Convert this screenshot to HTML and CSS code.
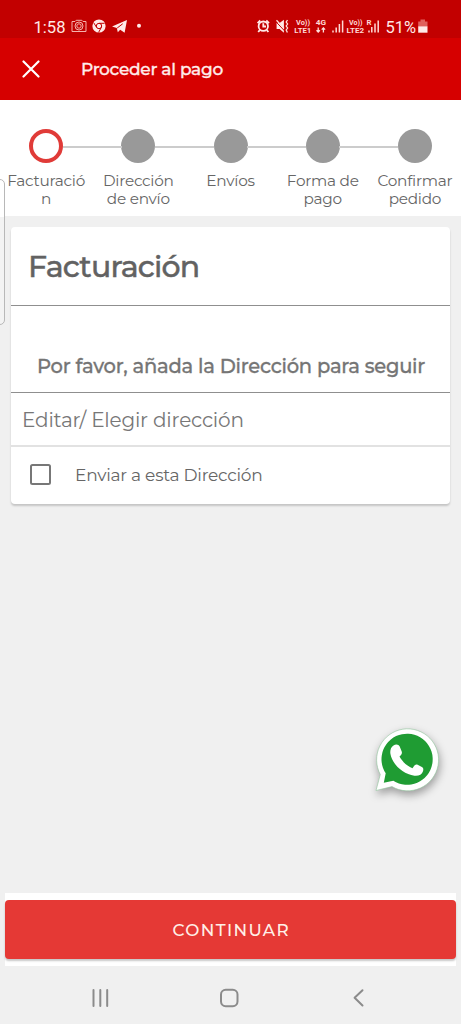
FILE: index.html
```html
<!DOCTYPE html>
<html lang="es">
<head>
<meta charset="utf-8">
<meta name="viewport" content="width=device-width, initial-scale=1">
<title>Proceder al pago</title>
<link rel="stylesheet" href="styles.css">
</head>
<body>
<div class="screen">
  <div class="status">
    <svg class="status-icons" viewBox="0 0 461 38" width="461" height="38" role="img">
      <text class="st-main" x="33.5" y="32.5" textLength="32" lengthAdjust="spacingAndGlyphs">1:58</text>
      <g class="thin">
        <path d="M72 21.5h3l1.2-1.2h5.6l1.2 1.2h3v10H72z"/>
        <circle cx="79" cy="26" r="4"/><circle cx="79" cy="26" r="2.2"/>
      </g>
      <circle class="fill" cx="99" cy="26" r="6.6"/>
      <g class="cut"><circle cx="99" cy="26" r="2.7"/><path d="M99 23.3h5.6M96.6 27.4l-3-4.8M101.3 27.4l-2.7 5"/></g>
      <path class="fill" d="M112 26.4L127 20l-2.4 12.8-4.4-3-2.4 2.5-1-4.3z"/>
      <path class="cut" d="M117.2 28l5.5-4.2"/>
      <circle class="fill" cx="139" cy="25.8" r="2"/>
      <g class="alarm"><circle cx="263.3" cy="26.2" r="4.7"/><path d="M263.3 23.3v3.2h2.7M257.6 23.2l2.7-2.7M269 23.2l-2.7-2.7M259.8 30.2l-1.6 1.8M266.8 30.2l1.6 1.8"/></g>
      <path class="fill" d="M276.6 23h3l4.300-3.200v12.900l-4.300-3.700h-3z"/>
      <path class="mutecut" d="M276 21.800l8.500 9"/>
      <path class="thin heavy" d="M276.500 20.200l7.500 8.300M287.500 20l-1.300 2 1.400 2-1.400 2 1.400 2-1.400 2 1.200 2.500"/>
      <g class="st-tiny">
        <text x="296" y="25.3" textLength="14" lengthAdjust="spacingAndGlyphs">Vo))</text>
        <text x="294.3" y="33" textLength="17" lengthAdjust="spacingAndGlyphs">LTE1</text>
        <text x="315.7" y="25.3" textLength="10.3" lengthAdjust="spacingAndGlyphs">4G</text>
        <text x="349" y="25.3" textLength="13.5" lengthAdjust="spacingAndGlyphs">Vo))</text>
        <text x="346.6" y="33" textLength="17.6" lengthAdjust="spacingAndGlyphs">LTE2</text>
        <text x="366.5" y="25.3" textLength="5" lengthAdjust="spacingAndGlyphs">R</text>
      </g>
      <path class="thin heavy" d="M318.2 27.5v4.5m-1.7-1.7l1.7 1.7 1.7-1.7M323.4 32.4v-4.5m-1.7 1.7l1.7-1.7 1.7 1.7"/>
      <path class="bars" d="M333 30.5v2M336.2 27.5v5M339.4 24v8.5M342.6 20.5v12M369 30.5v2M371.8 27v5.5M375 23.5v9M378.2 20.5v12"/>
      <text class="st-main" x="385.5" y="32.5" textLength="30.5" lengthAdjust="spacingAndGlyphs">51%</text>
      <path class="batt-top" d="M420.5 19.5h4.5v2h2.5v5h-9.3v-5h2.3z"/>
      <path class="fill" d="M418.2 26.3h9.3v6.4h-9.3z"/>
    </svg>
  </div>
  <header class="appbar">
    <svg class="close" viewBox="0 0 18 18" width="18" height="18"><path d="M1.5 1.5l15 15M16.5 1.5l-15 15"/></svg>
    <h1 class="title">Proceder al pago</h1>
  </header>
  <ol class="steps">
    <li class="step active"><span class="dot"></span><span class="label">Facturació<br>n</span></li>
    <li class="step"><span class="dot"></span><span class="label">Dirección<br>de envío</span></li>
    <li class="step"><span class="dot"></span><span class="label">Envíos</span></li>
    <li class="step"><span class="dot"></span><span class="label">Forma de<br>pago</span></li>
    <li class="step"><span class="dot"></span><span class="label">Confirmar<br>pedido</span></li>
  </ol>
  <main class="content">
    <section class="card">
      <h2 class="card-title">Facturación</h2>
      <p class="notice">Por favor, añada la Dirección para seguir</p>
      <a class="edit">Editar/ Elegir dirección</a>
      <label class="option"><span class="box"></span><span class="option-text">Enviar a esta Dirección</span></label>
    </section>
  </main>
  <footer class="footer"><button class="continue">CONTINUAR</button></footer>
  <nav class="nav">
    <svg viewBox="0 0 461 58" width="461" height="58">
      <path d="M93.5 24v16M100.3 24v16M107.2 24v16"/>
      <rect x="221" y="23.8" width="16.5" height="16.4" rx="4.7"/>
      <path d="M362.5 24.3l-7.9 7.5 7.9 7.7"/>
    </svg>
  </nav>
  <div class="edge-handle"></div>
  <svg class="whatsapp" viewBox="0 0 80 80" width="80" height="80">
    <path class="bubble" d="M11 70.500L15.300 54.500A31 31 0 1 1 27 66.600z"/>
    <path class="green" d="M18.800 62.800L20.700 53.300A25.600 25.600 0 1 1 28.300 60.800z"/>
    <path class="phone" d="M28.500 25.500c2.200-1.700 5.200-1.300 6.200 1l2 5c.6 1.600.1 2.800-2.200 5 3.200 5.500 7.200 9.300 13 11.700 2.300-3.400 3.200-4.200 5.100-3.500l4.300 2.200c1.700.9 1.600 2.400 1.100 4.300-1 3.400-4.700 5.100-8.600 4.500-11.500-1.700-22.200-11.300-24-21.900-.5-3.300.4-6.500 3.100-8.300z"/>
  </svg>
</div>
</body>
</html>
```
FILE: styles.css
```css
* { box-sizing: border-box; }
body { margin: 0; background: #efefef; font-family: Montserrat, Inter, "Liberation Sans", sans-serif; color: #666; }
.screen { position: relative; display: flex; flex-direction: column; width: 461px; height: 1024px; overflow: hidden; background: #f0f0f0; }
h1, h2, p, ol { margin: 0; padding: 0; }

.status { height: 38px; background: #c20000; }
.status-icons { display: block; }
.st-main { font: 17px Roboto, sans-serif; fill: #ffe9e6; }
.st-tiny { font: 700 8px Roboto, sans-serif; fill: #ffd9d5; }
.fill { fill: #ffeae8; }
.thin { fill: none; stroke: #f5b3ad; stroke-width: 1; }
.thin.heavy { stroke: #ffe0dc; stroke-width: 1.3; }
.cut { fill: none; stroke: #c20000; stroke-width: 1; }
.alarm { fill: none; stroke: #ffeae8; stroke-width: 1.8; }
.mutecut { stroke: #c20000; stroke-width: 1; }
.bars { stroke: #ffd9d5; stroke-width: 1.5; }
.batt-top { fill: #e0605c; }

.appbar { display: flex; align-items: center; height: 62px; padding-left: 22px; gap: 41px; background: #d60000; }
.close { fill: none; stroke: #fff; stroke-width: 2.2; stroke-linecap: round; }
.title { font-size: 17px; font-weight: 500; line-height: 20px; color: #ffecea; letter-spacing: -.3px; white-space: nowrap; -webkit-text-stroke: .3px #ffecea; }

.steps { display: flex; height: 116px; padding-top: 29px; background: #fff; list-style: none; }
.step { flex: 1; display: flex; flex-direction: column; align-items: center; position: relative; }
.step + .step::before { content: ""; position: absolute; top: 17px; left: -29.5px; width: 59px; height: 2px; background: #ccc; }
.dot { width: 34px; height: 34px; border-radius: 50%; background: #999; }
.active .dot { background: #fff; border: 4.5px solid #e03b38; }
.label { margin-top: 9px; font-size: 15.3px; line-height: 18.3px; text-align: center; white-space: nowrap; letter-spacing: -.25px; }

.content { flex: 1; padding: 11px 11px 0; }
.card { background: #fff; border-radius: 4px; box-shadow: 0 2px 2px rgba(0,0,0,.18); height: 277px; }
.card-title { height: 79px; padding-left: 17px; border-bottom: 1px solid #8f8f8f; font-size: 30px; font-weight: 500; line-height: 79px; letter-spacing: -.8px; color: #626262; -webkit-text-stroke: .4px #626262; }
.notice { height: 87px; padding-top: 47px; padding-left: 26px; border-bottom: 1px solid #8f8f8f; font-size: 19.5px; font-weight: 500; line-height: 26px; letter-spacing: -.23px; color: #757575; white-space: nowrap; -webkit-text-stroke: .3px #757575; }
.edit { display: block; height: 54px; padding-left: 11px; border-bottom: 2px solid #e2e2e2; font-size: 20px; line-height: 54px; letter-spacing: -.19px; color: #777; }
.option { display: flex; align-items: center; height: 57px; padding: 0 0 2px 19px; gap: 24px; }
.box { width: 21px; height: 21px; border: 2px solid #777; border-radius: 2.5px; }
.option-text { padding-top: 1px; font-size: 17px; letter-spacing: -.24px; color: #666; }

.footer { height: 73px; margin: 0 5px; padding-top: 7px; background: #fff; }
.continue { display: block; width: 451px; height: 59px; padding: 0; border: 0; border-radius: 4px; background: #e53935; color: #fff0e8; font: 500 16.8px Montserrat, Inter, sans-serif; letter-spacing: 1.35px; text-indent: 1.5px; box-shadow: 0 2px 2px rgba(0,0,0,.22); }
.nav { height: 58px; }
.nav svg { display: block; fill: none; stroke: #8b8b8b; stroke-width: 2; stroke-linecap: round; stroke-linejoin: round; }

.edge-handle { position: absolute; top: 179px; left: -8px; width: 13px; height: 146px; border: 1px solid #b8b8b8; border-radius: 5px; background: linear-gradient(#fff 37px, #f3f3f3 37px); }
.whatsapp { position: absolute; left: 365px; top: 720px; overflow: visible; }
.bubble { fill: #fff; stroke: #8fc49a; stroke-width: .6; filter: drop-shadow(1px 4px 4px rgba(0,0,0,.35)); }
.green { fill: #1f9c33; }
.phone { fill: #fff; }
```
